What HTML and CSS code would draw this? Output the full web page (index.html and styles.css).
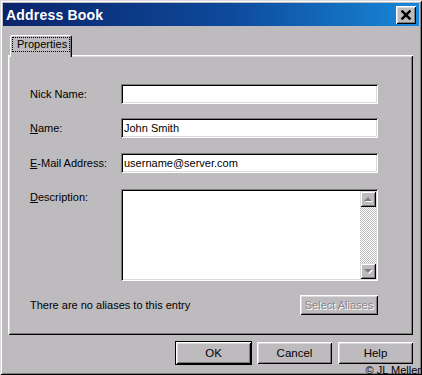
FILE: index.html
```html
<!DOCTYPE html>
<html>
<head>
<meta charset="utf-8">
<link rel="stylesheet" href="styles.css">
</head>
<body>
<div class="window">
  <div class="titlebar">
    <span class="title">Address Book</span>
    <div class="close">
      <svg width="10" height="9" viewBox="0 0 10 9"><path d="M1 0.5 L9 8.5 M9 0.5 L1 8.5" stroke="#000" stroke-width="2.2" fill="none"/></svg>
    </div>
  </div>
  <div class="content">
    <div class="tabs">
      <div class="tab"><span class="focus">Properties</span></div>
    </div>
    <div class="panel">
      <div class="row r1">
        <span class="label">Nick Name:</span>
        <div class="field"></div>
      </div>
      <div class="row r2">
        <span class="label"><u>N</u>ame:</span>
        <div class="field">John Smith</div>
      </div>
      <div class="row r3">
        <span class="label"><u>E</u>-Mail Address:</span>
        <div class="field">username@server.com</div>
      </div>
      <div class="row r4">
        <span class="label top"><u>D</u>escription:</span>
        <div class="field area">
          <div class="areatext"></div>
          <div class="scrollbar">
            <div class="sbtn"><span class="arrow up"></span></div>
            <div class="track"></div>
            <div class="sbtn"><span class="arrow down"></span></div>
          </div>
        </div>
      </div>
      <div class="row alias">
        <span class="note">There are no aliases to this entry</span>
        <div class="btn disabled">Select Aliases</div>
      </div>
    </div>
    <div class="buttons">
      <div class="btn default">OK</div>
      <div class="btn">Cancel</div>
      <div class="btn">Help</div>
    </div>
  </div>
  <div class="copyright">© JL Meller</div>
</div>
</body>
</html>
```

FILE: styles.css
```css
html, body {
  margin: 0;
  padding: 0;
}
body {
  width: 422px;
  height: 375px;
  overflow: hidden;
  background: #bebbbe;
  font-family: "Liberation Sans", Arial, sans-serif;
  font-size: 11px;
  color: #000;
}
.window {
  position: relative;
  box-sizing: border-box;
  width: 422px;
  height: 375px;
  padding: 3px;
  background: #bebbbe;
  box-shadow: inset 1px 1px 0 #dcdadc, inset -1px -1px 0 #000, inset 2px 2px 0 #fff, inset -2px -2px 0 #7e7c7e;
}
.titlebar {
  height: 23px;
  display: flex;
  align-items: center;
  justify-content: space-between;
  padding: 0 3px 0 3px;
  background: linear-gradient(to right, #0a246a 0%, #0e4a9c 55%, #1888d8 100%);
}
.title {
  color: #fff;
  font-weight: bold;
  font-size: 14px;
  letter-spacing: 0.2px;
}
.close {
  box-sizing: border-box;
  width: 20px;
  height: 18px;
  display: flex;
  align-items: center;
  justify-content: center;
  background: #bebbbe;
  box-shadow: inset 1px 1px 0 #fff, inset -1px -1px 0 #000, inset 2px 2px 0 #dcdadc, inset -2px -2px 0 #7e7c7e;
}
.close svg {
  width: 12px;
  height: 10px;
}
.content {
  padding: 9px 6px 0 5px;
}
.tabs {
  display: flex;
  padding-left: 2px;
  position: relative;
  z-index: 1;
  margin-bottom: -2px;
}
.tab {
  box-sizing: border-box;
  width: 62px;
  height: 22px;
  padding: 2px 2px 0 2px;
  background: #bebbbe;
  border-radius: 2px 2px 0 0;
  box-shadow: inset 1px 1px 0 #fff, inset -1px 0 0 #000, inset -2px 0 0 #7e7c7e;
}
.focus {
  display: block;
  height: 15px;
  line-height: 15px;
  padding-left: 5px;
  outline: 1px dotted #000;
  outline-offset: -1px;
}
.panel {
  box-sizing: border-box;
  width: 405px;
  height: 280px;
  padding: 29px 35px 0 22px;
  background: #bebbbe;
  box-shadow: inset 1px 1px 0 #fff, inset -1px -1px 0 #000, inset 2px 2px 0 #dcdadc, inset -2px -2px 0 #7e7c7e;
}
.row {
  display: flex;
  align-items: center;
}
.r2 { margin-top: 14px; }
.r3 { margin-top: 15px; }
.r4 { margin-top: 16px; align-items: flex-start; }
.alias {
  margin-top: 14px;
  justify-content: space-between;
}
.label {
  width: 91px;
  flex: none;
}
.label.top {
  padding-top: 2px;
}
.field {
  box-sizing: border-box;
  width: 257px;
  height: 20px;
  padding: 3px 2px 0 3px;
  background: #fff;
  box-shadow: inset 1px 1px 0 #7e7c7e, inset -1px -1px 0 #fff, inset 2px 2px 0 #000, inset -2px -2px 0 #dcdadc;
  line-height: 14px;
}
.field.area {
  height: 92px;
  padding: 2px 2px 2px 2px;
  display: flex;
}
.areatext {
  flex: 1;
}
.scrollbar {
  width: 16px;
  display: flex;
  flex-direction: column;
}
.sbtn {
  box-sizing: border-box;
  height: 16px;
  display: flex;
  align-items: center;
  justify-content: center;
  background: #bebbbe;
  box-shadow: inset 1px 1px 0 #dcdadc, inset -1px -1px 0 #000, inset 2px 2px 0 #fff, inset -2px -2px 0 #7e7c7e;
}
.track {
  flex: 1;
  background-color: #fff;
  background-image: repeating-conic-gradient(#bebbbe 0 25%, #fff 0 50%);
  background-size: 2px 2px;
}
.arrow {
  width: 0;
  height: 0;
  border-left: 4px solid transparent;
  border-right: 4px solid transparent;
}
.arrow.up {
  border-bottom: 4px solid #7e7c7e;
  filter: drop-shadow(1px 1px 0 #fff);
}
.arrow.down {
  border-top: 4px solid #7e7c7e;
  filter: drop-shadow(1px 1px 0 #fff);
}
.btn {
  box-sizing: border-box;
  width: 75px;
  height: 22px;
  display: flex;
  align-items: center;
  justify-content: center;
  font-size: 11.5px;
  background: #bebbbe;
  box-shadow: inset 1px 1px 0 #fff, inset -1px -1px 0 #000, inset 2px 2px 0 #dcdadc, inset -2px -2px 0 #7e7c7e;
}
.btn.disabled {
  width: 78px;
  height: 20px;
  font-size: 11px;
  color: #8a878a;
  text-shadow: 1px 1px 0 #fff;
}
.btn.default {
  outline: 1px solid #000;
}
.buttons {
  display: flex;
  justify-content: flex-end;
  gap: 6px;
  margin-top: 7px;
  width: 405px;
}
.copyright {
  position: absolute;
  right: 1px;
  bottom: -2px;
  font-size: 11px;
  line-height: 13px;
}
```
